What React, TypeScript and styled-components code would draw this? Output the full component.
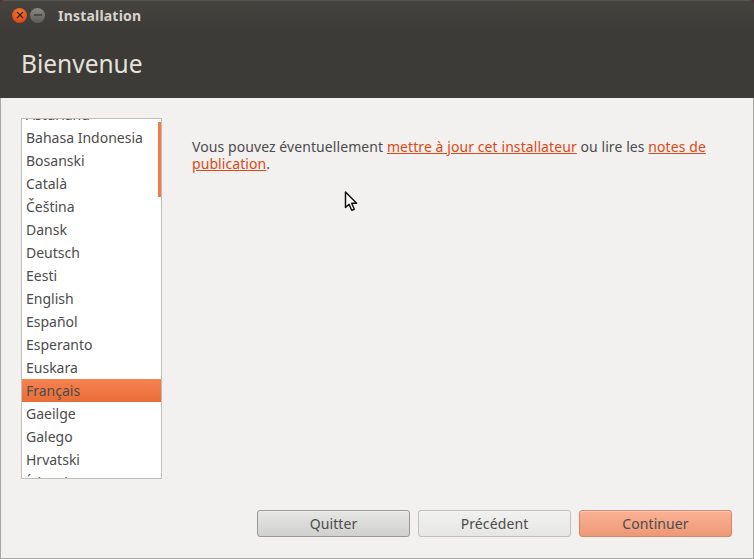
import React from 'react';
import styled, { createGlobalStyle } from 'styled-components';

const languages = [
  'Asturianu',
  'Bahasa Indonesia',
  'Bosanski',
  'Català',
  'Čeština',
  'Dansk',
  'Deutsch',
  'Eesti',
  'English',
  'Español',
  'Esperanto',
  'Euskara',
  'Français',
  'Gaeilge',
  'Galego',
  'Hrvatski',
  'Íslenska',
];

const Global = createGlobalStyle`
  html, body {
    margin: 0;
    padding: 0;
    background: #5a2a44;
  }
  * {
    box-sizing: border-box;
  }
`;

export default function App() {
  return (
    <>
      <Global />
      <Win>
        <Header>
          <TitleBar>
            <WinButtons>
              <CloseBtn>
                <svg width="8" height="8" viewBox="0 0 8 8">
                  <path d="M1 1l6 6M7 1L1 7" stroke="#3a2018" strokeWidth="1.3" />
                </svg>
              </CloseBtn>
              <MinBtn>
                <svg width="10" height="8" viewBox="0 0 10 8">
                  <path d="M1 4h8" stroke="#3c3b37" strokeWidth="1.4" />
                </svg>
              </MinBtn>
            </WinButtons>
            <WinTitle>Installation</WinTitle>
          </TitleBar>
          <Heading>Bienvenue</Heading>
        </Header>
        <Body>
          <Main>
            <ListBox>
              <ScrollThumb />
              <Rows>
                {languages.map((lang) => (
                  <Row key={lang} $selected={lang === 'Français'}>
                    {lang}
                  </Row>
                ))}
              </Rows>
            </ListBox>
            <Message>
              Vous pouvez éventuellement <a href="#maj">mettre à jour cet installateur</a> ou lire les{' '}
              <a href="#notes">notes de publication</a>.
            </Message>
          </Main>
          <Footer>
            <Btn $kind="dark">Quitter</Btn>
            <Btn $kind="light">Précédent</Btn>
            <Btn $kind="primary">Continuer</Btn>
          </Footer>
          <Cursor width="16" height="22" viewBox="0 0 16 22">
            <path
              d="M1.5 1v15.5l3.6-3.2 2.6 6 2.6-1.1-2.6-5.9h4.9z"
              fill="#fff"
              stroke="#111"
              strokeWidth="1.5"
              strokeLinejoin="round"
            />
          </Cursor>
        </Body>
      </Win>
    </>
  );
}

const Win = styled.div`
  width: 754px;
  height: 559px;
  display: flex;
  flex-direction: column;
  overflow: hidden;
  border-radius: 5px 5px 0 0;
  font-family: 'Noto Sans', sans-serif;
`;

const Header = styled.header`
  height: 98px;
  flex: none;
  background: #3c3b37;
  border-top: 1px solid #55544f;
`;

const TitleBar = styled.div`
  height: 28px;
  display: flex;
  align-items: center;
  padding: 0 0 0 12px;
  background: linear-gradient(#45443f, #3f3e3a 70%, #3c3b37);
`;

const WinButtons = styled.div`
  display: flex;
  gap: 3px;
  margin-right: 13px;
`;

const CircleBtn = styled.span`
  width: 15px;
  height: 15px;
  border-radius: 50%;
  display: flex;
  align-items: center;
  justify-content: center;
`;

const CloseBtn = styled(CircleBtn)`
  background: radial-gradient(circle at 50% 30%, #f47a3c, #dd4814 75%);
`;

const MinBtn = styled(CircleBtn)`
  background: linear-gradient(#8a8983, #5c5b56);
`;

const WinTitle = styled.span`
  font-size: 14px;
  font-weight: 700;
  letter-spacing: 0.2px;
  color: #d8d4cc;
`;

const Heading = styled.h1`
  margin: 0;
  padding: 18px 0 0 21px;
  font-size: 24.5px;
  line-height: 34px;
  font-weight: 400;
  color: #e6e2da;
`;

const Body = styled.div`
  position: relative;
  flex: 1;
  display: flex;
  flex-direction: column;
  background: #f2f1f0;
  border: 1px solid #a8a7a3;
  border-top: none;
`;

const Main = styled.div`
  flex: 1;
  display: flex;
  align-items: flex-start;
  padding: 20px 0 0 20px;
`;

const ListBox = styled.div`
  position: relative;
  width: 141px;
  height: 361px;
  flex: none;
  overflow: hidden;
  background: #fff;
  border: 1px solid #c2bfba;
`;

const ScrollThumb = styled.div`
  position: absolute;
  top: 3px;
  right: 0;
  width: 3px;
  height: 75px;
  background: #f47a45;
`;

const Rows = styled.div`
  margin-top: -16px;
`;

const Row = styled.div<{ $selected: boolean }>`
  height: 23px;
  line-height: 24px;
  padding-left: 4px;
  font-size: 14px;
  white-space: nowrap;
  color: #4c4c4c;
  background: ${(p) => (p.$selected ? 'linear-gradient(#f58250, #e96d38)' : 'transparent')};
`;

const Message = styled.p`
  margin: 20px 0 0 30px;
  width: 525px;
  font-size: 14px;
  line-height: 17px;
  letter-spacing: 0.08px;
  color: #4c4c4c;

  a {
    color: #dd4814;
    text-decoration: underline;
  }
`;

const Footer = styled.div`
  flex: none;
  display: flex;
  justify-content: flex-end;
  gap: 8px;
  padding: 0 21px 21px 0;
`;

const btnStyles = {
  dark: 'background: linear-gradient(#e6e6e5, #d0d0cf); border-color: #9a9996;',
  light: 'background: linear-gradient(#f1f1f0, #e6e6e5); border-color: #c0bfbc;',
  primary: 'background: linear-gradient(#fab294, #ee9877); border-color: #dc8666;',
};

const Btn = styled.button<{ $kind: 'dark' | 'light' | 'primary' }>`
  width: 153px;
  height: 27px;
  padding: 0;
  border: 1px solid;
  border-radius: 3px;
  box-shadow: inset 0 1px 0 rgba(255, 255, 255, 0.35);
  font-family: inherit;
  font-size: 14px;
  letter-spacing: 0.1px;
  color: #4c4c4c;
  ${(p) => btnStyles[p.$kind]}
`;

const Cursor = styled.svg`
  position: absolute;
  left: 343px;
  top: 93px;
`;
